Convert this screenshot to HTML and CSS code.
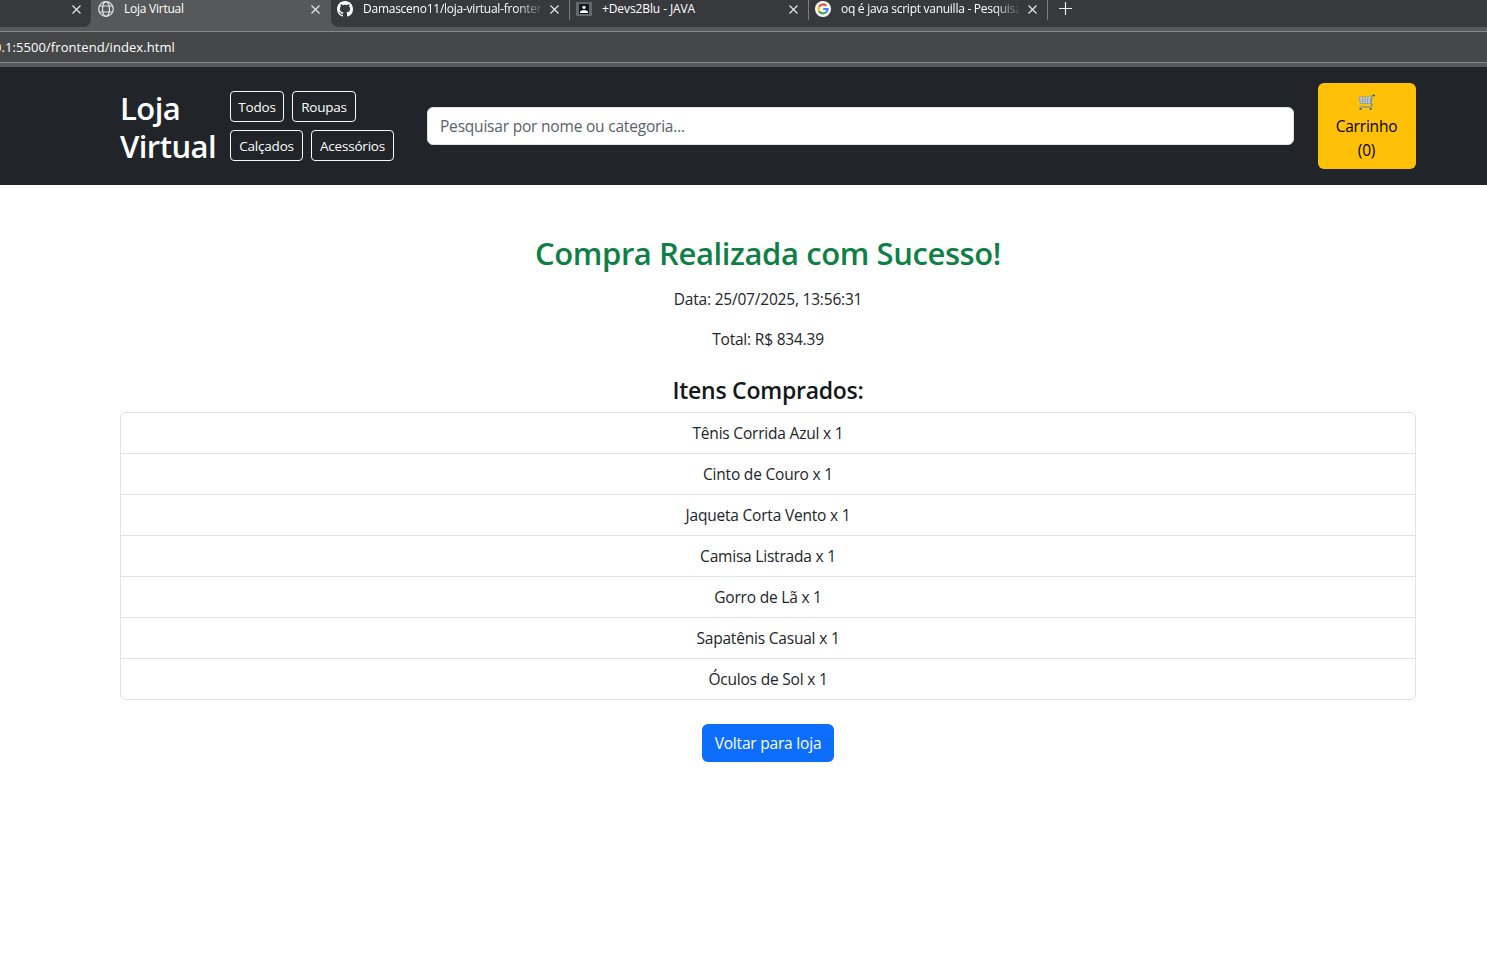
FILE: index.html
```html
<!DOCTYPE html>
<html lang="pt-BR">
<head>
<meta charset="utf-8">
<title>Loja Virtual</title>
<link rel="stylesheet" href="styles.css">
</head>
<body>
<div class="browser">
  <div class="tabs">
    <div class="tab tab-first"><svg class="close" viewBox="0 0 9 9"><path d="M.5.5l8 8M8.500.5l-8 8"/></svg></div>
    <div class="tab tab-active">
      <svg class="favicon globe" viewBox="0 0 16 16"><circle cx="8" cy="8" r="7.300"/><ellipse cx="8" cy="8" rx="3.500" ry="7.300"/><path d="M1.500 5h13M1.500 11h13"/></svg>
      <span class="tab-title">Loja Virtual</span>
      <svg class="close" viewBox="0 0 9 9"><path d="M.5.5l8 8M8.500.5l-8 8"/></svg>
    </div>
    <div class="tab tab-github">
      <svg class="favicon" viewBox="0 0 16 16"><path fill="#fff" d="M8 0C3.580 0 0 3.580 0 8c0 3.540 2.290 6.530 5.470 7.590.4.070.55-.17.55-.38 0-.19-.01-.82-.01-1.490-2.010.37-2.530-.49-2.690-.94-.09-.23-.48-.94-.82-1.130-.28-.15-.68-.52-.01-.53.63-.01 1.080.58 1.230.82.72 1.210 1.870.87 2.330.66.07-.52.28-.87.51-1.070-1.780-.2-3.640-.89-3.640-3.950 0-.87.31-1.590.82-2.150-.08-.2-.36-1.020.08-2.120 0 0 .67-.21 2.200.82.64-.18 1.320-.27 2-.27s1.360.09 2 .27c1.530-1.040 2.200-.82 2.200-.82.44 1.100.16 1.920.08 2.120.51.56.82 1.270.82 2.150 0 3.070-1.870 3.750-3.650 3.950.29.25.54.73.54 1.480 0 1.070-.01 1.930-.01 2.200 0 .21.15.46.55.38A8.010 8.010 0 0 0 16 8c0-4.420-3.580-8-8-8z"/></svg>
      <span class="tab-title faded">Damasceno11/loja-virtual-fronten</span>
      <svg class="close" viewBox="0 0 9 9"><path d="M.5.5l8 8M8.500.5l-8 8"/></svg>
    </div>
    <div class="tab tab-plain">
      <svg class="favicon" viewBox="0 0 16 16"><path fill="#606970" d="M0 1h16v14H0z"/><path fill="#16181b" d="M3 3h10v10H3z"/><circle cx="8" cy="6.300" r="1.600" fill="#fff"/><path fill="#fff" d="M4 12v-1c0-2.500 8-2.500 8 0v1z"/></svg>
      <span class="tab-title t-devs">+Devs2Blu - JAVA</span>
      <svg class="close" viewBox="0 0 9 9"><path d="M.5.5l8 8M8.500.5l-8 8"/></svg>
    </div>
    <div class="tab tab-plain">
      <svg class="favicon" viewBox="0 0 16 16"><circle cx="8" cy="8" r="8" fill="#fff"/><g fill="none" stroke-width="2.200"><path stroke="#ea4335" d="M4.100 5.800A4.500 4.500 0 0 1 11.300 4.800"/><path stroke="#fbbc05" d="M4.100 10.200a4.500 4.500 0 0 1 0-4.400"/><path stroke="#34a853" d="M11 11.300A4.500 4.500 0 0 1 4.100 10.200"/><path stroke="#4285f4" d="M8.200 8h4.300A4.500 4.500 0 0 1 11 11.300"/></g></svg>
      <span class="tab-title faded t-google">oq é java script vanuilla - Pesquisa</span>
      <svg class="close" viewBox="0 0 9 9"><path d="M.5.5l8 8M8.500.5l-8 8"/></svg>
    </div>
    <div class="tab tab-new"><svg class="plus" viewBox="0 0 13 13"><path d="M6.500 0v13M0 6.500h13"/></svg></div>
  </div>
  <div class="address"><span class="url">0.1:5500/frontend/index.html</span></div>
</div>
<div class="page">
  <nav class="navbar">
    <div class="container nav-row">
      <h1 class="brand">Loja Virtual</h1>
      <div class="filters">
        <button class="btn-sm w-todos">Todos</button>
        <button class="btn-sm w-roupas">Roupas</button>
        <button class="btn-sm w-calcados">Calçados</button>
        <button class="btn-sm w-acessorios">Acessórios</button>
      </div>
      <input class="search" type="text" placeholder="Pesquisar por nome ou categoria...">
      <button class="cart">
        <svg class="cart-icon" viewBox="0 0 17 17"><path d="M1 3h12l-.7 6.500H2.600zM1.600 5.200h11M2 7.300h10.500M4.300 3l.6 6.500M7 3v6.500M9.800 3l-.4 6.500" fill="#dfe3e3" stroke="#8b98a5" stroke-width=".9"/><path d="M16.500 1.400h-2.300L12.800 9.500l1.500 1.200-1.300 2.200H2.500" fill="none" stroke="#7291ae" stroke-width="1.300"/><path fill="#345b84" d="M15 .7h2v1.500h-2zM1.500 14h2v1.800h-2zM11.800 14h2v1.800h-2z"/></svg>
        <span>Carrinho</span>
        <span>(0)</span>
      </button>
    </div>
  </nav>
  <main class="container receipt">
    <h2 class="title">Compra Realizada com Sucesso!</h2>
    <p class="date">Data: 25/07/2025, 13:56:31</p>
    <p class="total">Total: R$ 834.39</p>
    <h4 class="subtitle">Itens Comprados:</h4>
    <ul class="items">
      <li>Tênis Corrida Azul x 1</li>
      <li>Cinto de Couro x 1</li>
      <li>Jaqueta Corta Vento x 1</li>
      <li>Camisa Listrada x 1</li>
      <li>Gorro de Lã x 1</li>
      <li>Sapatênis Casual x 1</li>
      <li>Óculos de Sol x 1</li>
    </ul>
    <button class="back">Voltar para loja</button>
  </main>
</div>
</body>
</html>
```

FILE: styles.css
```css
* { box-sizing: border-box; }
body {
  margin: 0;
  overflow: hidden;
  background: #fff;
  color: #212529;
  font: 15.5px/24px "Open Sans", "Noto Sans", sans-serif;
  letter-spacing: -0.2px;
}
h1, h2, h4, p, ul { margin: 0; padding: 0; }
button, input { font: inherit; letter-spacing: inherit; }

/* Browser chrome */
.browser { height: 67px; overflow: hidden; background: #57585c; color: #fff; }
.tabs { display: flex; height: 27px; background: #57585c; }
.tab { display: flex; align-items: flex-start; height: 27px; background: #38393d; flex: none; }
.tab-first { width: 91px; padding-left: 72px; border-bottom-right-radius: 8px; }
.tab-active { width: 240px; padding-left: 7px; background: #57585c; }
.tab-github { width: 238px; padding-left: 6px; border-bottom-left-radius: 8px; }
.tab-plain { width: 239px; padding-left: 7px; }
.tab-new { flex: 1; padding-left: 11px; }
.tab-plain::before, .tab-new::before {
  content: ""; width: 1px; height: 20px; margin-left: -7px; margin-right: 6px; background: #7b7c80;
}
.tab-new::before { margin-left: -11px; margin-right: 11px; }
.favicon { flex: none; width: 16px; height: 16px; margin-top: 1px; }
.globe { fill: none; stroke: #e4e4e5; stroke-width: 1.2; }
.tab-title {
  flex: none; width: 178px; margin: 1px 9px 0 10px; white-space: nowrap;
  font-size: 12px; line-height: 16px; letter-spacing: -0.25px;
}
.t-devs { letter-spacing: -0.1px; }
.t-google { letter-spacing: -0.27px; }
.faded {
  -webkit-mask-image: linear-gradient(90deg, #000 152px, transparent 182px);
  mask-image: linear-gradient(90deg, #000 152px, transparent 182px);
}
.close { flex: none; width: 9px; height: 9px; margin-top: 5px; fill: none; stroke: #e6e6e7; stroke-width: 1.2; }
.plus { width: 13px; height: 13px; margin-top: 2px; stroke: #ececed; stroke-width: 1.2; }
.address {
  height: 32px; margin-top: 4px; background: #464749;
  border-top: 1px solid #85868a; border-bottom: 1px solid #85868a;
  font-size: 13px; line-height: 31px; white-space: nowrap;
}
.url { display: inline-block; margin-left: -6px; letter-spacing: 0.07px; }

/* Store header */
.page { width: 1536px; }
.container { width: 1296px; margin: 0 auto; }
.navbar { height: 118px; padding: 16px 0; background: #212529; }
.nav-row { display: flex; align-items: center; height: 86px; }
.brand {
  width: 110px; padding-top: 1px; color: #fff;
  font-size: 31px; line-height: 38px; font-weight: 600; letter-spacing: -0.55px;
}
.filters { display: flex; flex-wrap: wrap; gap: 8px; width: 173px; margin-right: 24px; }
.btn-sm {
  height: 31px; padding: 1px 0 0; color: #fff; background: transparent;
  border: 1px solid #f8f9fa; border-radius: 4px; font-size: 13.5px; line-height: 21px;
}
.w-todos { width: 54px; }
.w-roupas { width: 64px; }
.w-calcados { width: 73px; }
.w-acessorios { width: 83px; }
.search {
  width: 867px; height: 38px; margin-right: 24px; padding: 6px 12px;
  border: 1px solid #dee2e6; border-radius: 6px; background: #fff;
}
.search::placeholder { color: #5b6168; opacity: 1; }
.cart {
  display: flex; flex-direction: column; align-items: center;
  width: 98px; height: 86px; padding: 7px 1px 7px 0; border: 0; border-radius: 6px;
  background: #ffc107; color: #000;
}
.cart-icon { width: 17px; height: 17px; margin: 4px 0 3px; }

/* Receipt */
.receipt { display: flex; flex-direction: column; align-items: center; padding-top: 49px; text-align: center; }
.title { color: #0f8045; font-size: 31px; line-height: 38px; font-weight: 600; letter-spacing: -0.4px; margin-bottom: 15px; }
.date { margin-bottom: 16px; }
.total { margin-bottom: 25px; }
.subtitle { font-size: 23px; line-height: 29px; font-weight: 600; letter-spacing: -0.25px; margin-bottom: 7px; color: #14171a; }
.items { width: 1296px; list-style: none; border: 1px solid #dee2e6; border-radius: 6px; }
.items li { height: 41px; padding: 8px 0; border-bottom: 1px solid #dee2e6; }
.items li:last-child { height: 40px; border-bottom: 0; }
.back {
  width: 132px; height: 38px; margin-top: 24px; padding: 0;
  border: 0; border-radius: 6px; background: #0d6efd; color: #fff;
}
```
